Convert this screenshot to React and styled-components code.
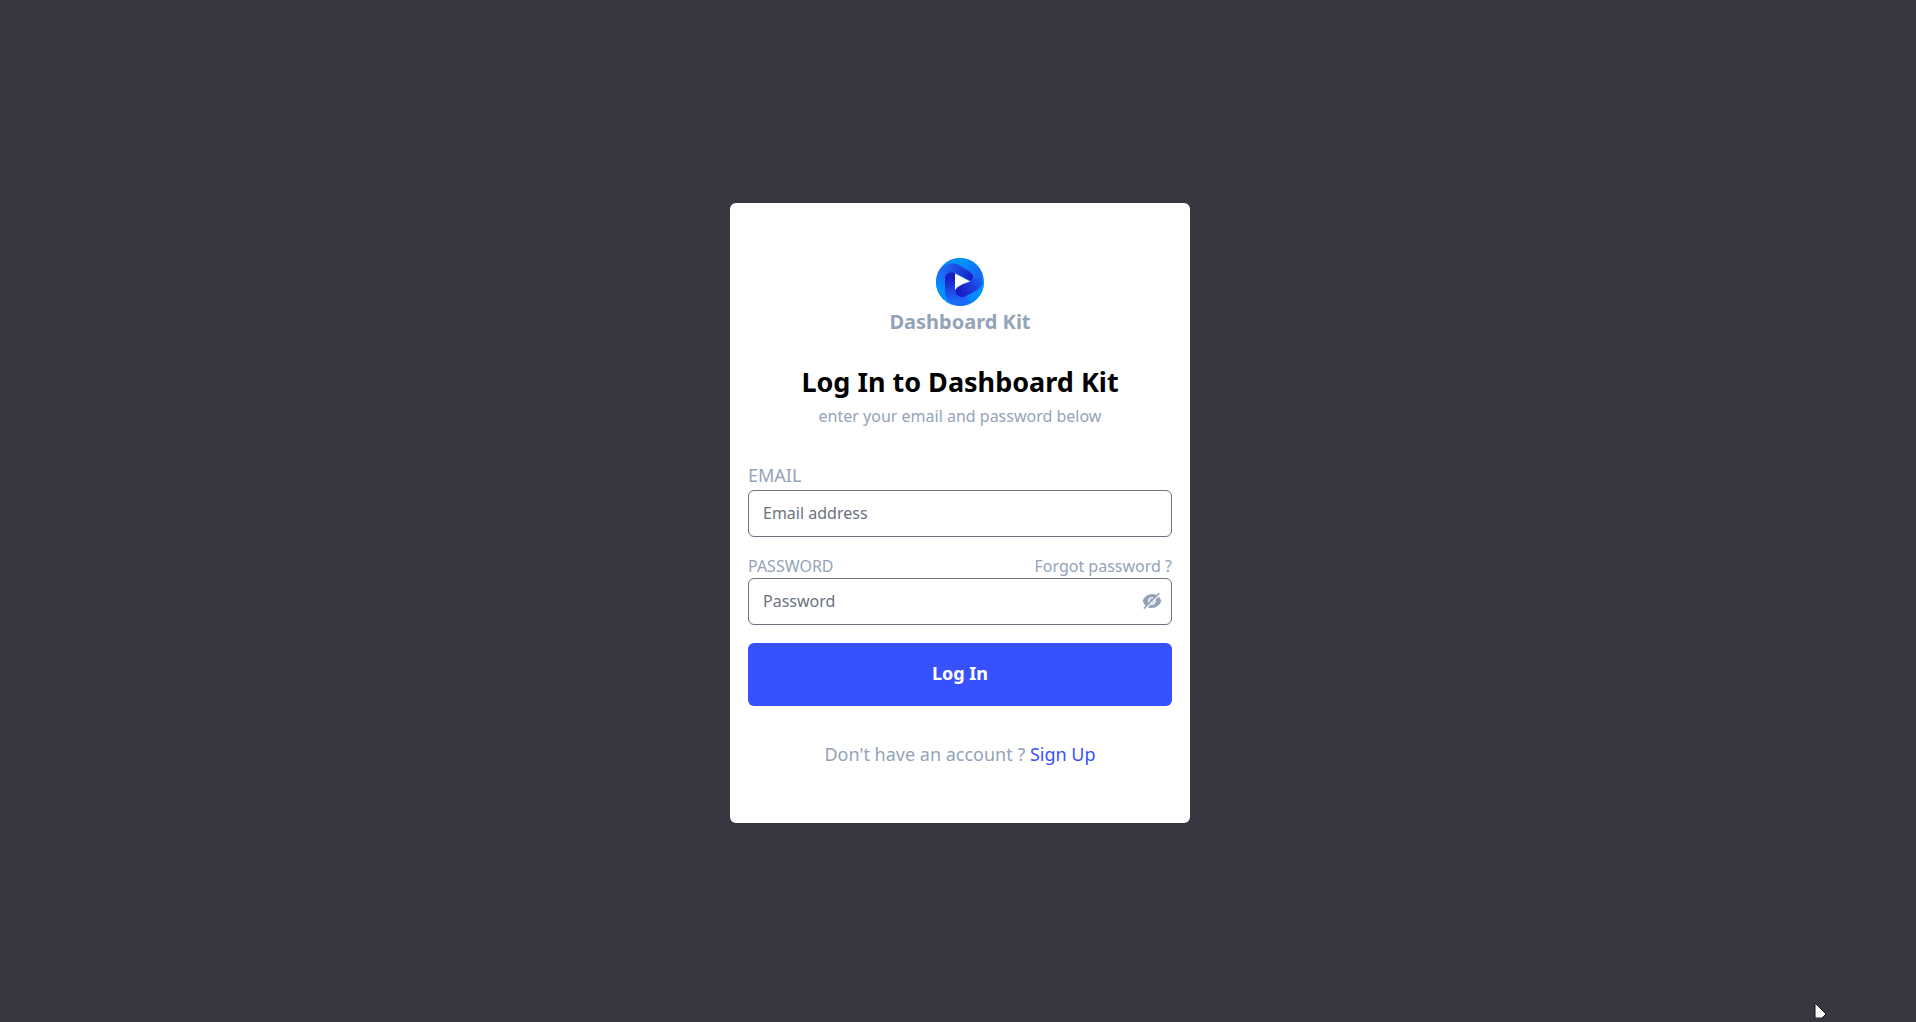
import React, { useState } from "react";
import styled, { createGlobalStyle } from "styled-components";
import { AiFillEyeInvisible, AiFillEye } from "react-icons/ai";

const GlobalStyle = createGlobalStyle`
  *, *::before, *::after { box-sizing: border-box; }
  body {
    margin: 0;
    background: #363740;
    font-family: "Noto Sans", sans-serif;
    font-size: 18px;
    line-height: 28px;
    color: #94a3b8;
  }
`;

const Page = styled.main`
  min-height: 100vh;
  display: flex;
  align-items: center;
  justify-content: center;
  padding: 4px 0 0 4px;
`;

const Card = styled.section`
  width: 100%;
  max-width: 460px;
  padding: 55px 18px;
  border-radius: 6px;
  background: #fff;
`;

const Brand = styled.div`
  display: flex;
  flex-direction: column;
  align-items: center;
`;

const BrandName = styled.p`
  margin: 2px 0 0;
  font-size: 20px;
  font-weight: 700;
`;

const Heading = styled.header`
  margin-top: 26px;
  text-align: center;
`;

const Title = styled.h1`
  margin: 0;
  font-size: 27px;
  line-height: 40px;
  font-weight: 700;
  color: #000;
`;

const Subtitle = styled.p`
  margin: 2px 0 0;
  font-size: 16px;
  line-height: 24px;
`;

const Form = styled.form`
  margin-top: 32px;
  display: flex;
  flex-direction: column;
  gap: 18px;
`;

const FieldHead = styled.div`
  display: flex;
  justify-content: space-between;
  font-size: ${(p) => (p.$small ? "16px" : "18px")};
  line-height: ${(p) => (p.$small ? "23px" : "30px")};
`;

const InputBox = styled.div`
  display: flex;
  align-items: center;
  height: 47px;
  padding: 0 8px 2px 0;
  border: 1px solid #6b7280;
  border-radius: 6px;
`;

const Input = styled.input`
  flex: 1;
  min-width: 0;
  height: 100%;
  padding: 0 14px;
  border: 0;
  outline: 0;
  background: transparent;
  font: inherit;
  font-size: 16px;
  color: #1e293b;
  &::placeholder { color: #6b7280; opacity: 1; }
`;

const ToggleButton = styled.button`
  display: flex;
  padding: 0;
  border: 0;
  background: none;
  color: #94a3b8;
  font-size: 22px;
  cursor: pointer;
`;

const SubmitButton = styled.button`
  height: 63px;
  padding: 0 0 4px;
  border: 0;
  border-radius: 6px;
  background: #3751ff;
  color: #fff;
  font: inherit;
  font-weight: 700;
  cursor: pointer;
`;

const Link = styled.a`
  color: ${(p) => (p.$accent ? "#3751ff" : "inherit")};
  text-decoration: none;
`;

const Footer = styled.p`
  margin: 34px 0 0;
  text-align: center;
`;

const Pointer = styled.svg`
  position: fixed;
  right: 88px;
  bottom: 4px;
`;

function Logo() {
  return (
    <svg width="48" height="48" viewBox="0 0 48 48" aria-hidden="true">
      <defs>
        <linearGradient id="rim" x1="0" y1="0" x2="1" y2="1">
          <stop offset="0" stopColor="#35adff" />
          <stop offset=".3" stopColor="#0092ff" />
          <stop offset=".7" stopColor="#0a80ff" />
          <stop offset="1" stopColor="#0098ff" />
        </linearGradient>
        <linearGradient id="top" gradientUnits="userSpaceOnUse" x1="10" y1="8" x2="36" y2="20">
          <stop offset="0" stopColor="#1a68f5" />
          <stop offset=".5" stopColor="#1c40dc" />
          <stop offset="1" stopColor="#1a1cc4" />
        </linearGradient>
        <linearGradient id="left" gradientUnits="userSpaceOnUse" x1="16" y1="20" x2="18" y2="44">
          <stop offset="0" stopColor="#1a1cc4" />
          <stop offset=".5" stopColor="#1c48e4" />
          <stop offset="1" stopColor="#1c6cfa" />
        </linearGradient>
        <linearGradient id="right" gradientUnits="userSpaceOnUse" x1="46" y1="20" x2="24" y2="34">
          <stop offset="0" stopColor="#1c64f2" />
          <stop offset=".5" stopColor="#1c3cdc" />
          <stop offset="1" stopColor="#1a1cc4" />
        </linearGradient>
        <linearGradient id="arcLeft" gradientUnits="userSpaceOnUse" x1="16" y1="8" x2="4" y2="32">
          <stop offset="0" stopColor="#1c64f2" />
          <stop offset=".4" stopColor="#1c6cfa" />
          <stop offset="1" stopColor="#0092ff" />
        </linearGradient>
        <linearGradient id="arcRight" gradientUnits="userSpaceOnUse" x1="26" y1="4" x2="42" y2="18">
          <stop offset="0" stopColor="#0092ff" />
          <stop offset="1" stopColor="#1c64f2" />
        </linearGradient>
        <linearGradient id="arcBottom" gradientUnits="userSpaceOnUse" x1="22" y1="42" x2="40" y2="34">
          <stop offset="0" stopColor="#1c6cfa" />
          <stop offset="1" stopColor="#0092ff" />
        </linearGradient>
        <clipPath id="disc">
          <circle cx="24" cy="24" r="24" />
        </clipPath>
      </defs>
      <g clipPath="url(#disc)">
        <rect width="48" height="48" fill="url(#rim)" />
        <path d="M7 8C11 2 18-1 26 0c12 0 20 10 20 20l-9 2c0-3-1-5-3-7L20 7C15 4 11 5 7 8Z" fill="url(#arcRight)" />
        <path d="M0 20C2 10 10 4 18 6l4 9c-7-4-13-1-13 6v12c0 6 3 11 8 14C8 46 0 38 0 28Z" fill="url(#arcLeft)" />
        <path d="M48 22c0 5-3 9-7 12l-11 6c-5 2-10-1-10-6l-5 12 9 2c14 0 24-10 24-24Z" fill="url(#arcBottom)" />
        <path d="M10 7c4-2 9-2 13 0l11 7c4 3 4 6 1 9L19 15c-5-2-10 0-10 6-1-5-1-11 1-14Z" fill="url(#top)" />
        <path d="M19 15c-5-2-10 0-10 6v12c0 8 6 15 15 15 3 0 7-1 10-3l-4-7c-5 2-11-1-11-6Z" fill="url(#left)" />
        <path d="M25 39c-3-1-6-3-6-7l7-7 9-2 4-3h7c1 6-1 9-5 12l-11 6c-2 1-4 1-5 1Z" fill="url(#right)" />
        <path d="M19 15.500l15 8-7 2.500q-5 2-8 6Z" fill="#fff" />
      </g>
    </svg>
  );
}

export default function App() {
  const [visible, setVisible] = useState(false);
  return (
    <>
      <GlobalStyle />
      <Page>
        <Card>
          <Brand>
            <Logo />
            <BrandName>Dashboard Kit</BrandName>
          </Brand>
          <Heading>
            <Title>Log In to Dashboard Kit</Title>
            <Subtitle>enter your email and password below</Subtitle>
          </Heading>
          <Form onSubmit={(e) => e.preventDefault()}>
            <div>
              <FieldHead>
                <label htmlFor="email">EMAIL</label>
              </FieldHead>
              <InputBox>
                <Input id="email" type="email" placeholder="Email address" />
              </InputBox>
            </div>
            <div>
              <FieldHead $small>
                <label htmlFor="password">PASSWORD</label>
                <Link href="#forgot">Forgot password ?</Link>
              </FieldHead>
              <InputBox>
                <Input id="password" type={visible ? "text" : "password"} placeholder="Password" />
                <ToggleButton
                  type="button"
                  aria-label={visible ? "Hide password" : "Show password"}
                  onClick={() => setVisible(!visible)}
                >
                  {visible ? <AiFillEye /> : <AiFillEyeInvisible />}
                </ToggleButton>
              </InputBox>
            </div>
            <SubmitButton type="submit">Log In</SubmitButton>
          </Form>
          <Footer>
            Don't have an account ? <Link href="#signup" $accent>Sign Up</Link>
          </Footer>
        </Card>
      </Page>
      <Pointer width="14" height="16" viewBox="0 0 14 16" aria-hidden="true">
        <path d="M1 16V1l11 11-4 4Z" fill="#fff" stroke="#111" strokeWidth="1" />
      </Pointer>
    </>
  );
}
